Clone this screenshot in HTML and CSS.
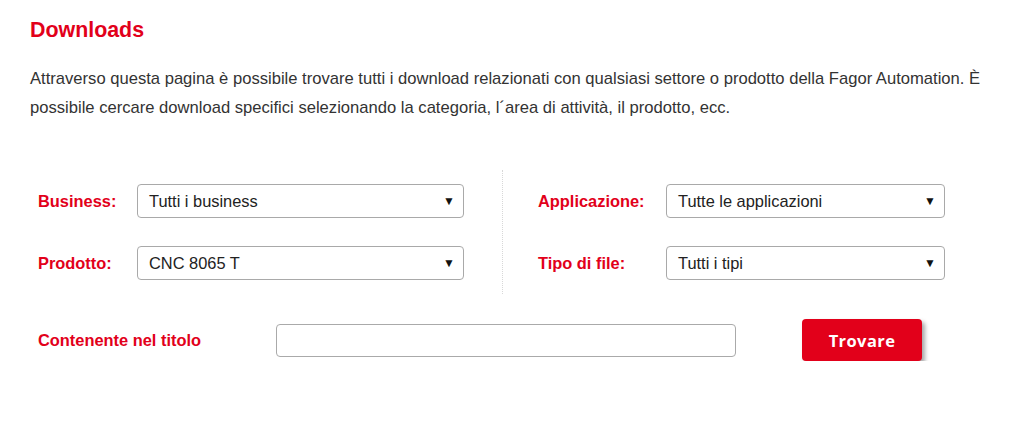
FILE: index.html
```html
<!DOCTYPE html>
<html lang="it">
<head>
<meta charset="utf-8">
<title>Downloads</title>
<link rel="stylesheet" href="styles.css">
</head>
<body>
<main class="page">
  <h1 class="title">Downloads</h1>
  <p class="intro">Attraverso questa pagina è possibile trovare tutti i download relazionati con qualsiasi settore o prodotto della Fagor Automation. È possibile cercare download specifici selezionando la categoria, l´area di attività, il prodotto, ecc.</p>
  <form class="filters">
    <div class="grid">
      <div class="col col-left">
        <div class="row">
          <label class="label">Business:</label>
          <div class="select"><span class="select-text">Tutti i business</span><span class="arrow">▼</span></div>
        </div>
        <div class="row">
          <label class="label">Prodotto:</label>
          <div class="select"><span class="select-text">CNC 8065 T</span><span class="arrow">▼</span></div>
        </div>
      </div>
      <div class="divider"></div>
      <div class="col col-right">
        <div class="row">
          <label class="label">Applicazione:</label>
          <div class="select"><span class="select-text">Tutte le applicazioni</span><span class="arrow">▼</span></div>
        </div>
        <div class="row">
          <label class="label">Tipo di file:</label>
          <div class="select"><span class="select-text">Tutti i tipi</span><span class="arrow">▼</span></div>
        </div>
      </div>
    </div>
    <div class="search-row">
      <label class="label label-search">Contenente nel titolo</label>
      <input class="search-input" type="text">
      <button class="btn" type="button">Trovare</button>
    </div>
  </form>
</main>
</body>
</html>
```
FILE: styles.css
```css
* { box-sizing: border-box; }
html, body { margin: 0; padding: 0; background: #fff; }
body { font-family: "Liberation Sans", Arial, sans-serif; color: #333; }
.page { padding: 0 30px; }
.title {
  margin: 0;
  padding-top: 18px;
  font-size: 21.4px;
  line-height: 24px;
  font-weight: 700;
  color: #e2001a;
}
.intro {
  margin: 22px 0 0;
  font-size: 16.6px;
  line-height: 29px;
  color: #333;
  max-width: 964px;
}
.filters { margin-top: 48px; }
.grid { display: flex; align-items: stretch; }
.col {
  display: flex;
  flex-direction: column;
  gap: 28px;
  padding: 14px 0;
}
.col-left { padding-left: 8px; width: 472px; }
.col-left .label { width: 99px; }
.col-left .select { width: 327px; }
.divider { width: 0; border-left: 1px dotted #d8d8d8; }
.col-right { padding-left: 35px; }
.col-right .label { width: 128px; }
.col-right .select { width: 279px; }
.row { display: flex; align-items: center; }
.label {
  font-size: 16.4px;
  font-weight: 700;
  color: #e2001a;
}
.select {
  position: relative;
  height: 34px;
  border: 1px solid #a9a9a9;
  border-radius: 4px;
  background: #fff;
  display: flex;
  align-items: center;
  padding-left: 11px;
  font-size: 16.4px;
  color: #222;
}
.arrow {
  position: absolute;
  right: 8px;
  top: 50%;
  transform: translateY(-50%);
  font-size: 12px;
  color: #111;
}
.search-row {
  display: flex;
  align-items: center;
  margin-top: 25px;
  padding-left: 8px;
}
.label-search { width: 238px; }
.search-input {
  width: 460px;
  height: 33px;
  border: 1px solid #aaa;
  border-radius: 4px;
  margin: 0;
  padding: 0 8px;
  font-size: 15px;
}
.btn {
  margin-left: 66px;
  width: 120px;
  height: 42px;
  border: 0;
  border-radius: 4px;
  background: #e2001a;
  color: #fff;
  font-family: "Open Sans", "Liberation Sans", sans-serif;
  font-weight: 700;
  font-size: 16.5px;
  letter-spacing: 0.4px;
  box-shadow: 3px 3px 4px rgba(0,0,0,0.35);
  cursor: pointer;
}
```
